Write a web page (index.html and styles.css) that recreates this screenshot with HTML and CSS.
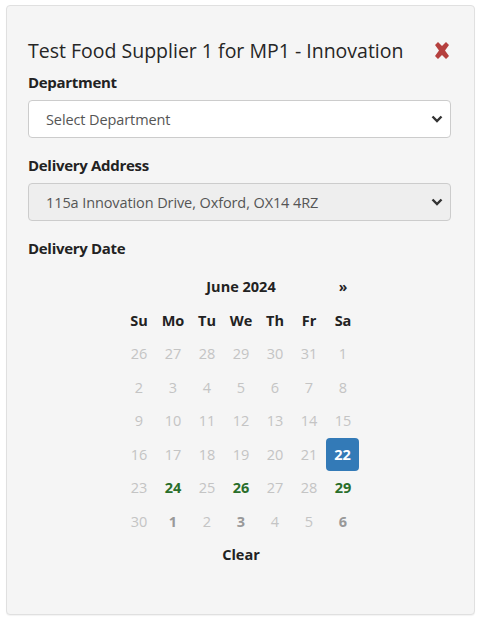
FILE: index.html
```html
<!DOCTYPE html>
<html>
<head>
<meta charset="utf-8">
<link rel="stylesheet" href="styles.css">
</head>
<body>
<div class="panel">
  <div class="head">
    <h2 class="title">Test Food Supplier 1 for MP1 - Innovation</h2>
    <svg class="close" width="18" height="17" viewBox="0 0 18 17"><path d="M2 3 L5 0 L9 4 L13 0 L16 3 L12 8.5 L16 14 L13 17 L9 13 L5 17 L2 14 L6 8.5 Z" fill="#b5403e"/></svg>
  </div>
  <label class="lbl">Department</label>
  <div class="select">
    <span>Select Department</span>
    <svg class="chev" width="12" height="8" viewBox="0 0 12 8"><path d="M1.5 1.5 L6 6 L10.5 1.5" stroke="#333" stroke-width="2.4" fill="none"/></svg>
  </div>
  <label class="lbl lbl2">Delivery Address</label>
  <div class="select disabled">
    <span>115a Innovation Drive, Oxford, OX14 4RZ</span>
    <svg class="chev" width="12" height="8" viewBox="0 0 12 8"><path d="M1.5 1.5 L6 6 L10.5 1.5" stroke="#333" stroke-width="2.4" fill="none"/></svg>
  </div>
  <label class="lbl lbl3">Delivery Date</label>
  <div class="cal">
    <div class="cell"></div>
    <div class="cell month">June 2024</div>
    <div class="cell nav">»</div>
    <div class="cell dow">Su</div><div class="cell dow">Mo</div><div class="cell dow">Tu</div><div class="cell dow">We</div><div class="cell dow">Th</div><div class="cell dow">Fr</div><div class="cell dow">Sa</div>
    <div class="cell off">26</div><div class="cell off">27</div><div class="cell off">28</div><div class="cell off">29</div><div class="cell off">30</div><div class="cell off">31</div><div class="cell off">1</div>
    <div class="cell off">2</div><div class="cell off">3</div><div class="cell off">4</div><div class="cell off">5</div><div class="cell off">6</div><div class="cell off">7</div><div class="cell off">8</div>
    <div class="cell off">9</div><div class="cell off">10</div><div class="cell off">11</div><div class="cell off">12</div><div class="cell off">13</div><div class="cell off">14</div><div class="cell off">15</div>
    <div class="cell off">16</div><div class="cell off">17</div><div class="cell off">18</div><div class="cell off">19</div><div class="cell off">20</div><div class="cell off">21</div><div class="cell active">22</div>
    <div class="cell off">23</div><div class="cell avail">24</div><div class="cell off">25</div><div class="cell avail">26</div><div class="cell off">27</div><div class="cell off">28</div><div class="cell avail">29</div>
    <div class="cell off">30</div><div class="cell next">1</div><div class="cell off">2</div><div class="cell next">3</div><div class="cell off">4</div><div class="cell off">5</div><div class="cell next">6</div>
    <div class="cell clear">Clear</div>
  </div>
</div>
</body>
</html>
```
FILE: styles.css
```css
html, body { margin: 0; padding: 0; background: #fff; }
body {
  font-family: "Open Sans", "Noto Sans", sans-serif;
  color: #222;
  padding: 5px 10px 5px 6px;
}
.panel {
  width: 423px;
  height: 550px;
  background: #f5f5f5;
  border: 1px solid #e0e0e0;
  border-radius: 4px;
  box-shadow: 0 1px 1px rgba(0,0,0,0.05);
  padding: 33px 23px 25px 21px;
  display: flex;
  flex-direction: column;
}
.head {
  display: flex;
  justify-content: space-between;
  align-items: center;
  height: 24px;
}
.title {
  margin: 0;
  font-size: 19.5px;
  font-weight: 500;
  color: #262626;
  letter-spacing: 0;
  white-space: nowrap;
  line-height: 24px;
}
.close { margin-right: 0; margin-top: -1px; }
.lbl {
  display: block;
  font-weight: 700;
  font-size: 15px;
  letter-spacing: -0.3px;
  color: #222;
  margin-top: 8px;
  height: 22px;
  line-height: 22px;
}
.lbl2 { margin-top: 16px; }
.lbl3 { margin-top: 16px; }
.select {
  margin-top: 7px;
  height: 36px;
  background: #fff;
  border: 1px solid #ccc;
  border-radius: 4px;
  display: flex;
  align-items: center;
  justify-content: space-between;
  padding: 0 7px 0 17px;
  font-size: 14.5px;
  color: #555;
  letter-spacing: -0.1px;
}
.select.disabled { background: #eee; }
.cal {
  align-self: center;
  margin-top: 11px;
  display: grid;
  grid-template-columns: repeat(7, 34px);
  grid-auto-rows: 33.5px;
  font-size: 14.5px;
  margin-left: 3px;
}
.cell {
  display: flex;
  align-items: center;
  justify-content: center;
  border-radius: 4px;
}
.month { grid-column: span 5; font-weight: 700; color: #222; }
.nav { font-weight: 700; font-size: 14px; color: #222; }
.dow { font-weight: 700; color: #222; }
.off { color: #c4c4c4; }
.active {
  background: #337ab7;
  color: #fff;
  font-weight: 700;
  margin: 0 1px 0 0;
  border-radius: 4px;
}
.avail { color: #2a6e2a; font-weight: 700; }
.next { color: #999; font-weight: 700; }
.clear { grid-column: 1 / -1; font-weight: 700; color: #222; }
```
